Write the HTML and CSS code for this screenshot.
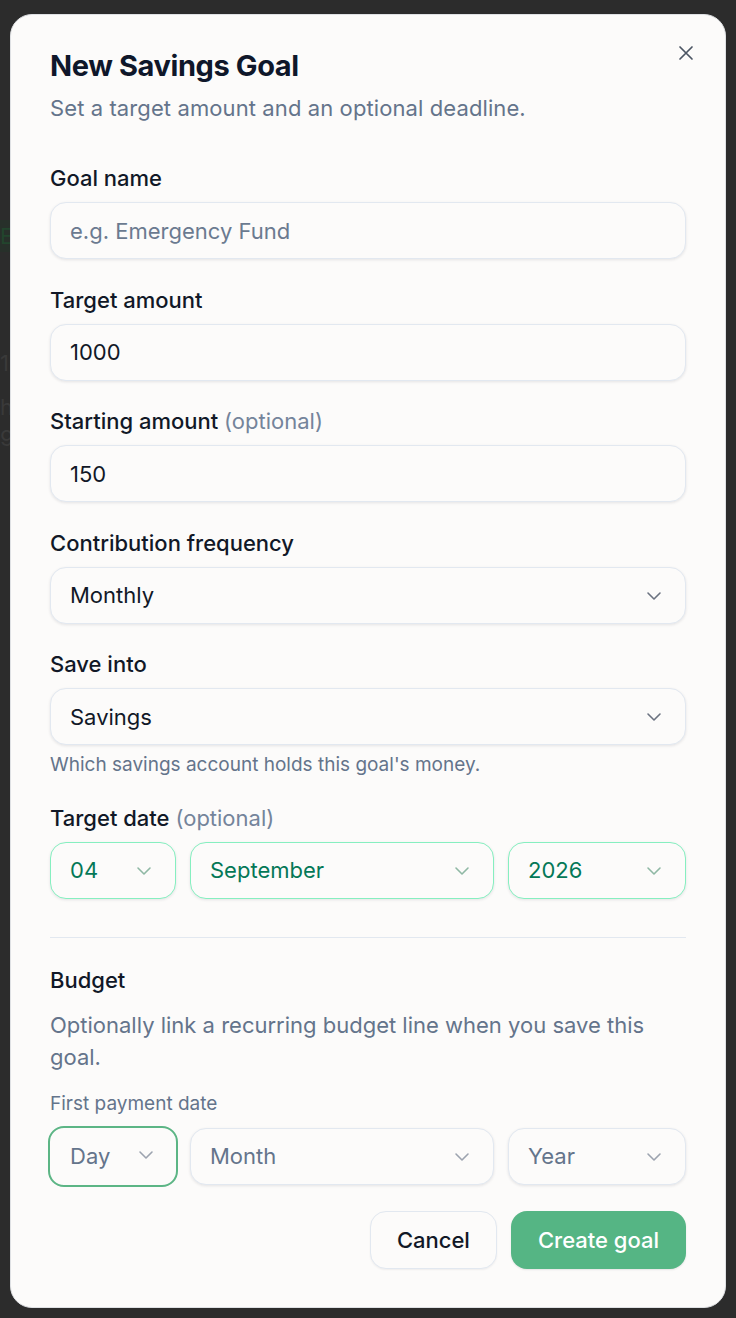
FILE: index.html
```html
<!DOCTYPE html>
<html lang="en">
<head>
  <meta charset="UTF-8" />
  <meta name="viewport" content="width=device-width, initial-scale=1.0"/>
  <title>New Savings Goal</title>
  <link rel="stylesheet" href="styles.css">
</head>
<body>
  <div class="backdrop">
    <span class="ghost ghost-e">E</span>
    <span class="ghost ghost-1">1</span>
    <span class="ghost ghost-h">h</span>
    <span class="ghost ghost-9">9</span>
  </div>

  <div class="modal">
    <button class="close" aria-label="Close">
      <svg width="16" height="16" viewBox="0 0 16 16" fill="none" stroke="currentColor" stroke-width="1.7" stroke-linecap="round">
        <path d="M2 2L14 14M14 2L2 14"/>
      </svg>
    </button>

    <h2 class="title">New Savings Goal</h2>
    <p class="subtitle">Set a target amount and an optional deadline.</p>

    <div class="field">
      <label>Goal name</label>
      <input class="control" type="text" placeholder="e.g. Emergency Fund" />
    </div>

    <div class="field">
      <label>Target amount</label>
      <input class="control" type="text" value="1000" />
    </div>

    <div class="field">
      <label>Starting amount <span class="muted">(optional)</span></label>
      <input class="control" type="text" value="150" />
    </div>

    <div class="field">
      <label>Contribution frequency</label>
      <div class="select">
        <select class="control"><option>Monthly</option></select>
        <svg class="chev" width="16" height="10" viewBox="0 0 16 10" fill="none" stroke="currentColor" stroke-width="1.6" stroke-linecap="round" stroke-linejoin="round"><path d="M2 2l6 6 6-6"/></svg>
      </div>
    </div>

    <div class="field">
      <label>Save into</label>
      <div class="select">
        <select class="control"><option>Savings</option></select>
        <svg class="chev" width="16" height="10" viewBox="0 0 16 10" fill="none" stroke="currentColor" stroke-width="1.6" stroke-linecap="round" stroke-linejoin="round"><path d="M2 2l6 6 6-6"/></svg>
      </div>
      <p class="hint">Which savings account holds this goal's money.</p>
    </div>

    <div class="field">
      <label>Target date <span class="muted">(optional)</span></label>
      <div class="date-row filled">
        <div class="select">
          <select class="control"><option>04</option></select>
          <svg class="chev" width="16" height="10" viewBox="0 0 16 10" fill="none" stroke="currentColor" stroke-width="1.6" stroke-linecap="round" stroke-linejoin="round"><path d="M2 2l6 6 6-6"/></svg>
        </div>
        <div class="select">
          <select class="control"><option>September</option></select>
          <svg class="chev" width="16" height="10" viewBox="0 0 16 10" fill="none" stroke="currentColor" stroke-width="1.6" stroke-linecap="round" stroke-linejoin="round"><path d="M2 2l6 6 6-6"/></svg>
        </div>
        <div class="select">
          <select class="control"><option>2026</option></select>
          <svg class="chev" width="16" height="10" viewBox="0 0 16 10" fill="none" stroke="currentColor" stroke-width="1.6" stroke-linecap="round" stroke-linejoin="round"><path d="M2 2l6 6 6-6"/></svg>
        </div>
      </div>
    </div>

    <hr class="divider" />

    <div class="budget">
      <h3>Budget</h3>
      <p class="budget-text">Optionally link a recurring budget line when you save this goal.</p>
      <p class="small-label">First payment date</p>
      <div class="date-row empty">
        <div class="select focused">
          <select class="control"><option>Day</option></select>
          <svg class="chev" width="16" height="10" viewBox="0 0 16 10" fill="none" stroke="currentColor" stroke-width="1.6" stroke-linecap="round" stroke-linejoin="round"><path d="M2 2l6 6 6-6"/></svg>
        </div>
        <div class="select">
          <select class="control"><option>Month</option></select>
          <svg class="chev" width="16" height="10" viewBox="0 0 16 10" fill="none" stroke="currentColor" stroke-width="1.6" stroke-linecap="round" stroke-linejoin="round"><path d="M2 2l6 6 6-6"/></svg>
        </div>
        <div class="select">
          <select class="control"><option>Year</option></select>
          <svg class="chev" width="16" height="10" viewBox="0 0 16 10" fill="none" stroke="currentColor" stroke-width="1.6" stroke-linecap="round" stroke-linejoin="round"><path d="M2 2l6 6 6-6"/></svg>
        </div>
      </div>
    </div>

    <div class="actions">
      <button class="btn btn-cancel">Cancel</button>
      <button class="btn btn-primary">Create goal</button>
    </div>
  </div>
</body>
</html>
```

FILE: styles.css
```css
* {
  box-sizing: border-box;
}

body {
  margin: 0;
  min-height: 1318px;
  background-color: #2c2c2c;
  font-family: Inter, 'Noto Sans', sans-serif;
  padding: 14px 10px 10px;
}

/* blurred page behind the dialog */
.backdrop {
  position: absolute;
  inset: 0;
  overflow: hidden;
  pointer-events: none;
}

.ghost {
  position: absolute;
  left: 0;
  font-size: 22px;
  color: #3a3a3a;
}

.ghost-e {
  top: 220px;
  width: 10px;
  height: 32px;
  padding-top: 3px;
  background-color: #27302a;
  color: #22452d;
}

.ghost-1 { top: 350px; }
.ghost-h { top: 394px; }
.ghost-9 { top: 425px; }

.modal {
  position: relative;
  background-color: #fcfbfa;
  border: 1px solid #dfe1e4;
  border-radius: 22px;
  padding: 32px 39px 38px;
}

.close {
  position: absolute;
  top: 30px;
  right: 30px;
  width: 18px;
  height: 18px;
  padding: 0;
  border: none;
  background: none;
  color: #4b5563;
  cursor: pointer;
}

.title {
  margin: 0;
  font-size: 29px;
  line-height: 38px;
  font-weight: 700;
  color: #0f172a;
  letter-spacing: -0.4px;
}

.subtitle {
  margin: 8px 0 41px;
  font-size: 22px;
  line-height: 30px;
  color: #64748b;
  letter-spacing: 0.1px;
}

.field {
  margin-bottom: 26.5px;
}

.field label {
  display: block;
  font-size: 22px;
  line-height: 28px;
  font-weight: 500;
  color: #111827;
  margin-bottom: 10px;
}

.muted {
  color: #74849b;
  font-weight: 400;
}

.control {
  display: block;
  width: 100%;
  height: 57px;
  padding: 0 19px;
  font-family: Inter, 'Noto Sans', sans-serif;
  font-size: 22px;
  color: #111827;
  background-color: #fcfbfa;
  border: 1px solid #e2e8f0;
  border-radius: 16px;
  box-shadow: 0 1px 3px rgba(15, 23, 42, 0.1);
  outline: none;
  -webkit-appearance: none;
  appearance: none;
}

.control::placeholder {
  color: #6b7a90;
}

.select {
  position: relative;
}

.chev {
  position: absolute;
  right: 24px;
  top: 24px;
  color: #6b7280;
  pointer-events: none;
}

.hint {
  margin: 8px 0 0;
  font-size: 19px;
  line-height: 24px;
  color: #64748b;
}

.date-row {
  display: grid;
  grid-template-columns: 126px 1fr 178px;
  gap: 14px;
}

.date-row.filled .control {
  color: #047857;
  border-color: #86efc0;
}

.date-row.filled .chev {
  color: #8fb8a4;
}

.date-row.empty .control {
  color: #64748b;
}

.date-row.empty .chev {
  color: #9ca3af;
}

.select.focused .control {
  border: 2px solid #5cb585;
  box-shadow: none;
  margin: -2px -2px;
  width: calc(100% + 4px);
  height: 61px;
  padding-left: 20px;
}

.select.focused .chev {
  top: 22px;
  right: 22px;
}

.divider {
  border: none;
  border-top: 1px solid #e2e8f0;
  margin: 38px 0 28px;
}

.budget h3 {
  margin: 0 0 15px;
  font-size: 22px;
  line-height: 28px;
  font-weight: 500;
  color: #111827;
}

.budget-text {
  margin: 0 0 19px;
  font-size: 22px;
  line-height: 32px;
  color: #64748b;
  padding-right: 20px;
}

.small-label {
  margin: 0 0 12px;
  font-size: 19px;
  line-height: 24px;
  color: #64748b;
}

.actions {
  display: flex;
  justify-content: flex-end;
  gap: 14px;
  margin-top: 26px;
}

.btn {
  height: 58px;
  font-family: Inter, 'Noto Sans', sans-serif;
  font-size: 22px;
  font-weight: 500;
  border-radius: 16px;
  cursor: pointer;
}

.btn-cancel {
  padding: 0 26px;
  background-color: #fcfbfa;
  color: #111827;
  border: 1px solid #e2e8f0;
  box-shadow: 0 1px 2px rgba(15, 23, 42, 0.06);
}

.btn-primary {
  padding: 0 27px;
  background-color: #55b584;
  color: #ffffff;
  border: none;
  box-shadow: 0 1px 2px rgba(15, 23, 42, 0.1);
}
```
